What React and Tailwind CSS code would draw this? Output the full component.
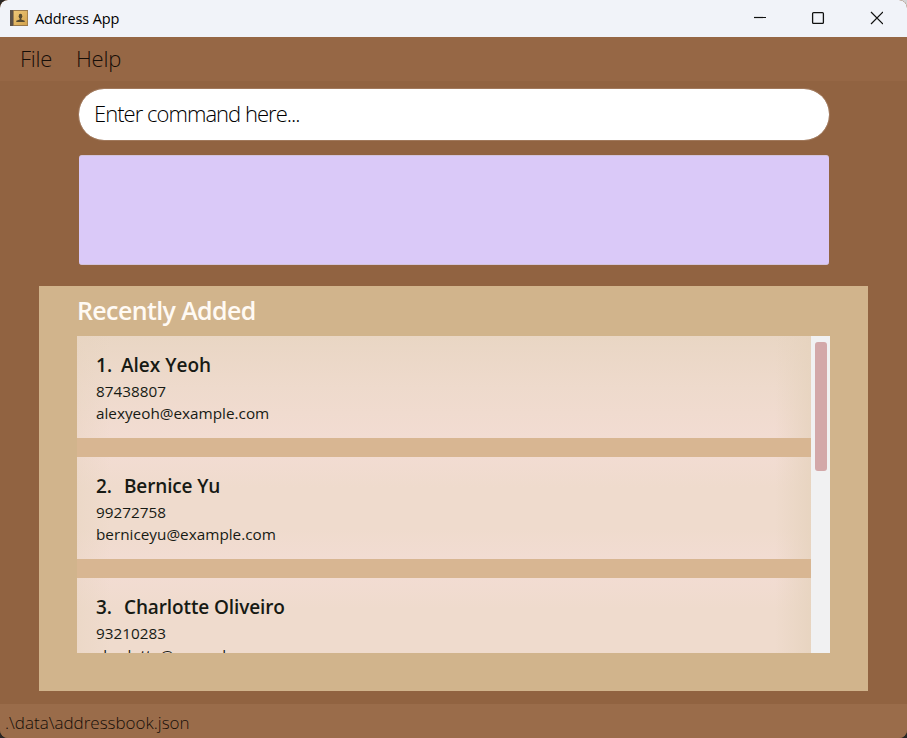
const contacts = [
  { name: "Alex Yeoh", phone: "87438807", email: "alexyeoh@example.com", bg: "bg-linear-to-b from-[#e9d6c4] via-[#eedacc] to-[#f2dcd2]", nameTrack: "tracking-[0px]", gap: "w-[25px]" },
  { name: "Bernice Yu", phone: "99272758", email: "berniceyu@example.com", bg: "bg-[linear-gradient(#f2dcd2,#efdbcd_30%,#efdbcd_70%,#f2dcd2)]", nameTrack: "tracking-[-0.15px]", gap: "w-[28px]" },
  { name: "Charlotte Oliveiro", phone: "93210283", email: "charlotte@example.com", bg: "bg-[linear-gradient(#f2dcd2,#efdbcd_30%,#efdbcd)]", nameTrack: "tracking-[-0.12px]", gap: "w-[28px]" },
];

function BookIcon() {
  return (
    <svg className="ml-[10px] mt-[10px] h-[17px] w-[18px] shrink-0" viewBox="0 0 18 17">
      <defs>
        <linearGradient id="cover" x1="0" y1="0" x2="1" y2="1">
          <stop offset="0" stopColor="#efc878" />
          <stop offset="1" stopColor="#d3a24c" />
        </linearGradient>
      </defs>
      <rect width="18" height="16" fill="#99784a" />
      <rect width="3.2" height="16" fill="#5c5148" />
      <rect x="3.8" y="1" width="13.4" height="14" fill="url(#cover)" />
      <ellipse cx="10.5" cy="6.2" rx="1.8" ry="2.4" fill="#56492f" />
      <path d="M9.7 7h1.6v2.4l3.4 1.3V12H6.3v-1.3l3.4-1.3z" fill="#56492f" />
    </svg>
  );
}

function TitleBar() {
  return (
    <header className="flex h-[37px] shrink-0 items-start rounded-t-lg bg-[#f1f3f9] text-black">
      <BookIcon />
      <span className="ml-[7px] mt-[9px] whitespace-nowrap text-[14.5px] leading-5 tracking-[-0.1px]">Address App</span>
      <svg className="ml-auto mr-[24px] mt-[11px] h-[14px] w-[130px] shrink-0" viewBox="0 0 130 14" fill="none" stroke="#111" strokeWidth="1.2">
        <path d="M1 6.5h12" />
        <rect x="59.6" y="1.6" width="10.8" height="10.8" rx="1" strokeWidth="1.3" />
        <path d="m118 1 12 12M130 1l-12 12" />
      </svg>
    </header>
  );
}

function ContactCard({ index, contact }) {
  return (
    <article className={`h-[102px] shrink-0 text-[#171a14] ${contact.bg}`}>
      <div className="h-full whitespace-nowrap bg-[linear-gradient(90deg,#e6d3be60_0,transparent_34px,transparent_calc(100%-36px),#e6d3bed0_100%)] pl-[19px] pt-[17px]">
        <div className={`flex text-[19px] font-semibold leading-[25px] ${contact.nameTrack}`}>
          <span className={contact.gap}>{index}.</span>
          <span>{contact.name}</span>
        </div>
        <div className="mt-[2px] text-[15.3px] leading-[22px]">{contact.phone}</div>
        <div className="text-[15.3px] leading-[22px]">{contact.email}</div>
      </div>
    </article>
  );
}

export default function App() {
  return (
    <div className="h-[738px] w-[907px] overflow-hidden bg-[linear-gradient(90deg,#292624_50%,#d4d4d6_50%)]">
      <div className="h-full bg-[linear-gradient(transparent_50%,#292624_50%)] font-['Open_Sans','Noto_Sans',sans-serif]">
        <div className="flex h-full flex-col overflow-hidden rounded-lg bg-[#916341]">
          <TitleBar />
          <nav className="flex h-[44px] shrink-0 bg-[#966745] pl-[20px] pt-[6px] text-[22px] font-light leading-[30px] tracking-[-0.25px] text-[#160e08]">
            <span className="w-[56px]">File</span>
            <span>Help</span>
          </nav>
          <main className="flex min-h-0 flex-1 flex-col">
            <div className="ml-[79px] mt-[8px] flex h-[51px] w-[750px] shrink-0 items-center rounded-[25px] bg-white pb-[3px] pl-[15px] text-[22px] font-light text-black outline outline-[#b18f78]/50">
              <span className="tracking-[-0.97px]">Enter command here...</span>
            </div>
            <div className="ml-[79px] mt-[15px] h-[110px] w-[750px] shrink-0 rounded-[3px] border-y border-[#d2c2da] bg-[#dac9f8]" />
            <section className="ml-[39px] mt-[21px] h-[405px] w-[829px] shrink-0 bg-[#d1b48c] pl-[38px] pt-[7px]">
              <h1 className="h-[43px] whitespace-nowrap text-[25px] font-semibold leading-[34px] tracking-[-0.63px] text-[#fffaf4]">Recently Added</h1>
              <div className="flex h-[317px] w-[753px] overflow-hidden bg-[#f1f1f2]">
                <div className="flex h-full w-[734px] flex-col gap-[19px] overflow-hidden bg-[#d8b692]">
                  {contacts.map((contact, i) => (
                    <ContactCard key={contact.name} index={i + 1} contact={contact} />
                  ))}
                </div>
                <div className="h-full flex-1 pl-[4px] pt-[6px]">
                  <div className="h-[129px] w-[12px] rounded-[3px] bg-[#d3a8a9]" />
                </div>
              </div>
            </section>
          </main>
          <footer className="h-[34px] shrink-0 bg-[#9a6c4a] pl-[5px] pt-[7px] text-[17px] font-light leading-[24px] text-[#160e08]">
            .\data\addressbook.json
          </footer>
        </div>
      </div>
    </div>
  );
}
